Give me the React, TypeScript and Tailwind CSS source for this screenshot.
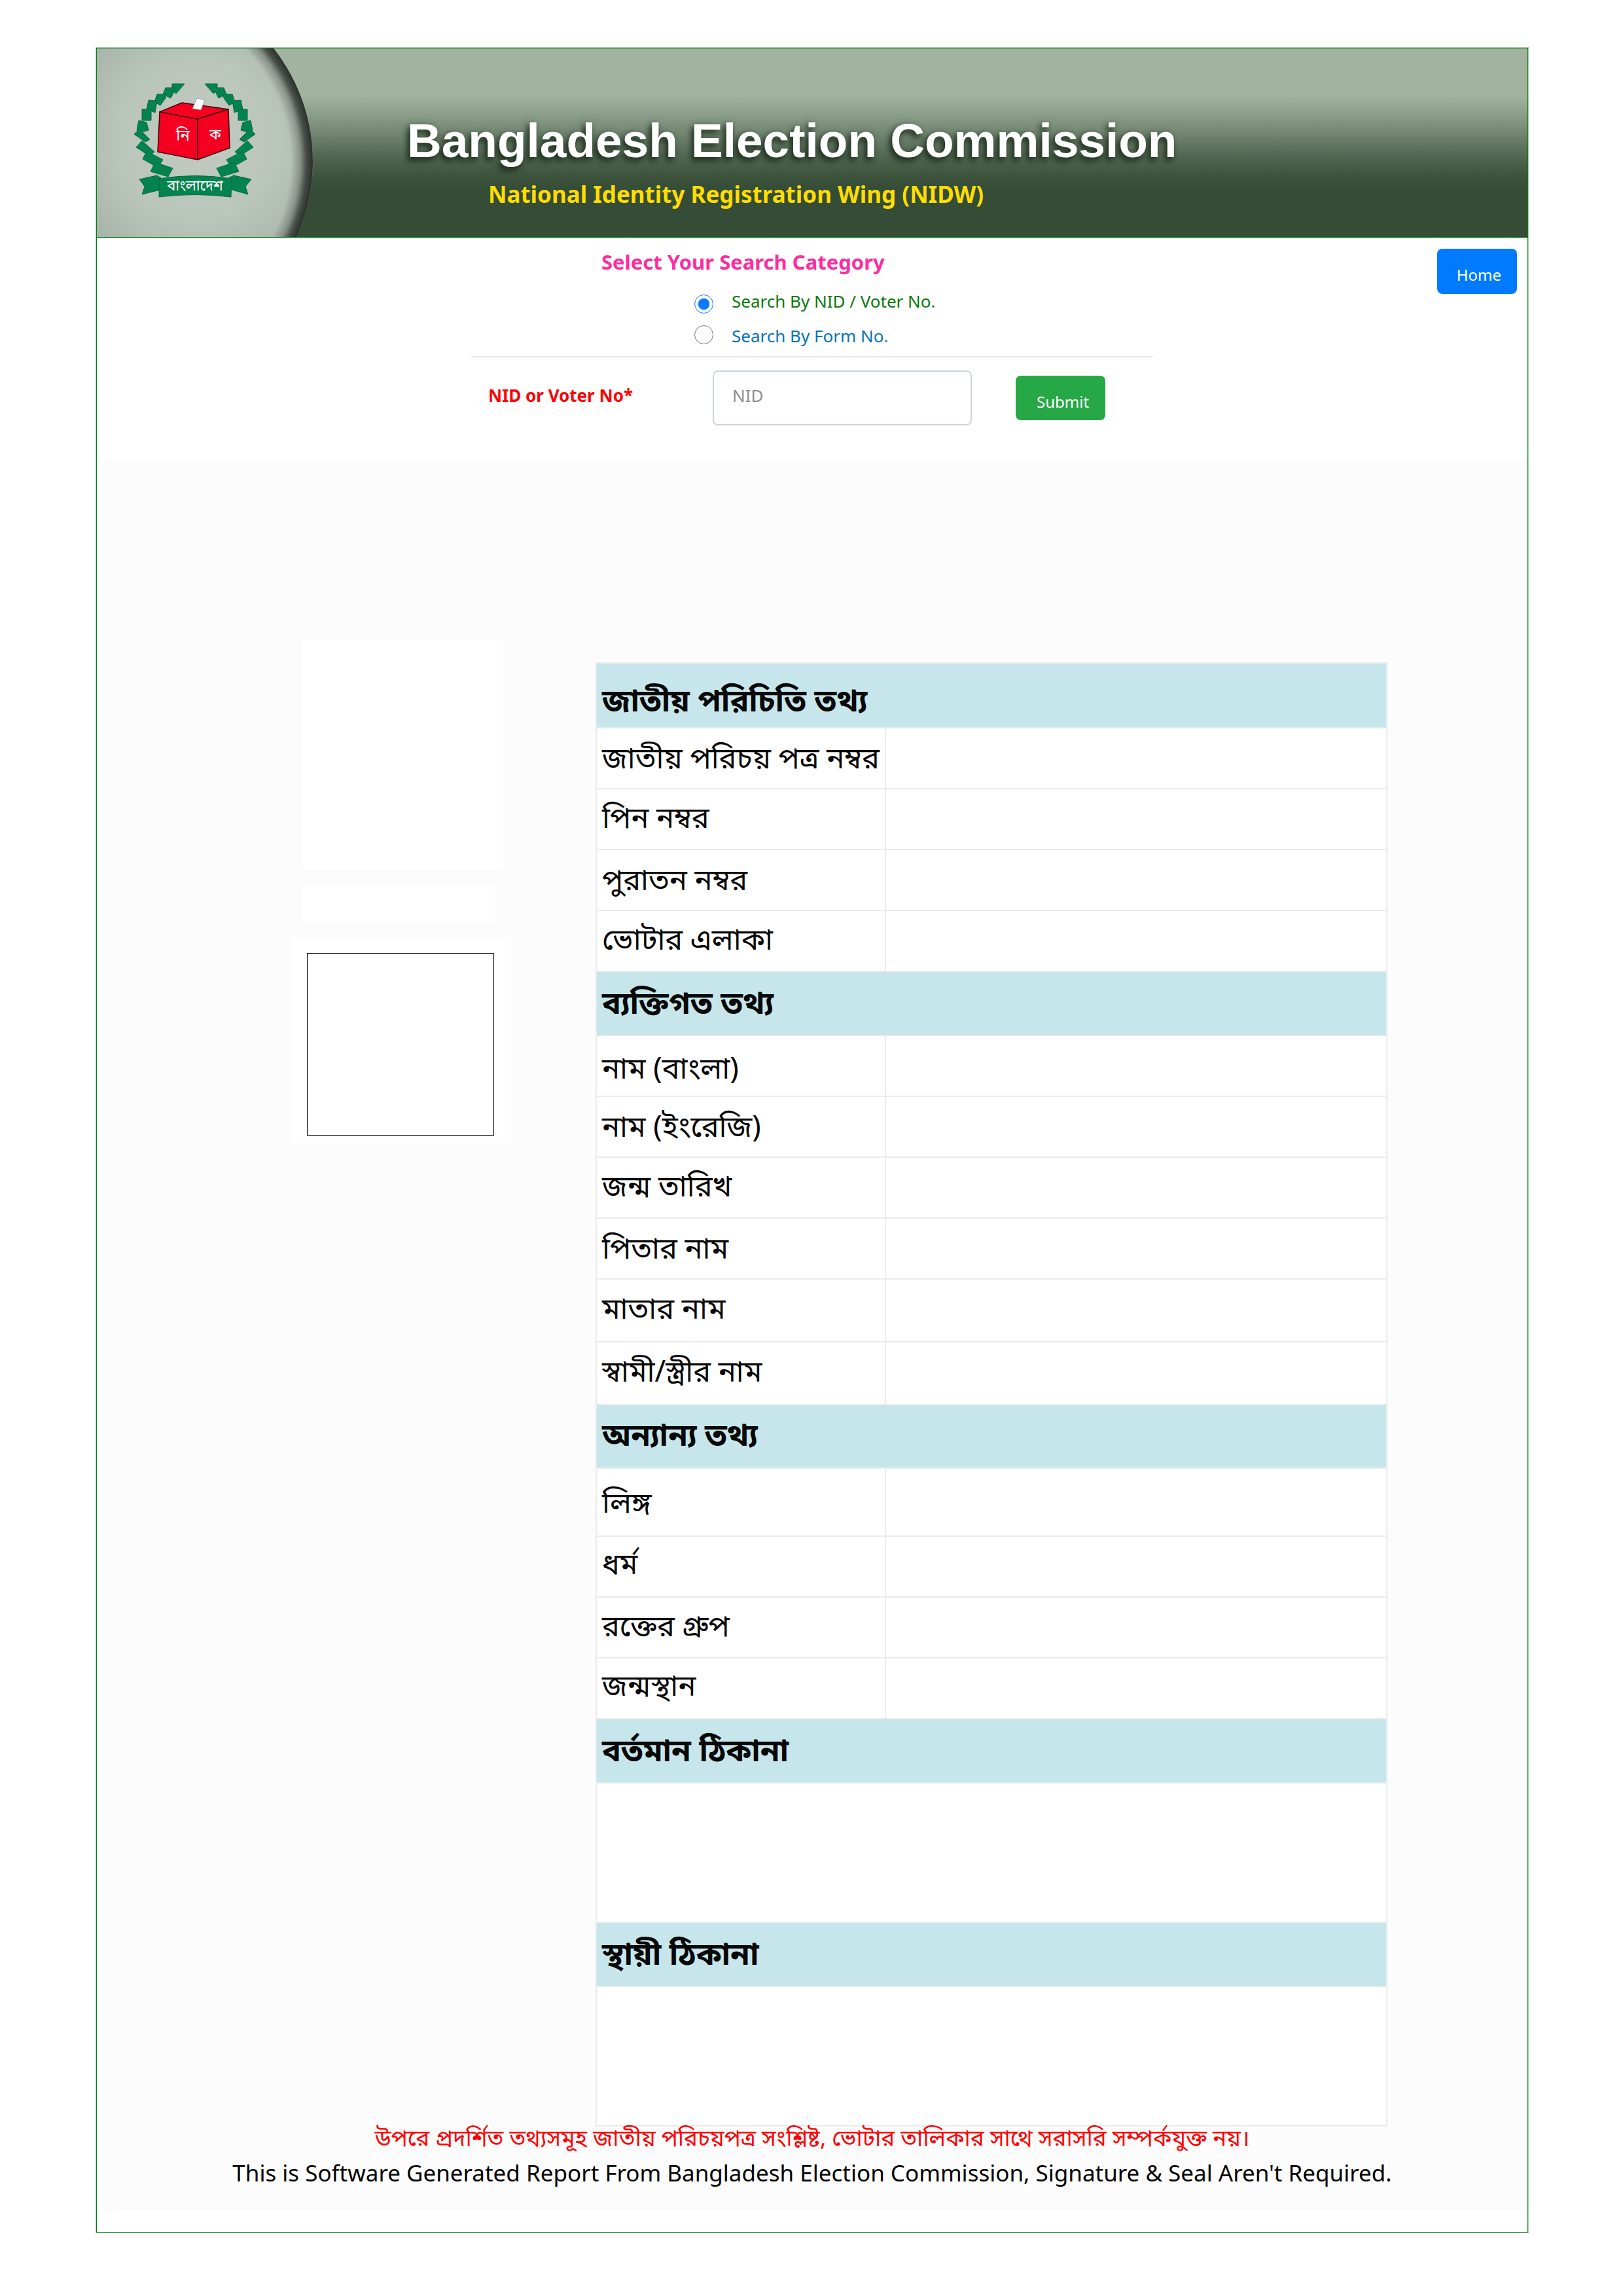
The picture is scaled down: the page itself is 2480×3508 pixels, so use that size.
import React from "react";

const sans = "font-['Noto_Sans','Open_Sans',sans-serif]";
const bangla = "font-['Noto_Sans_Bengali','Noto_Sans',sans-serif]";

type Row =
  | { kind: "section"; label: string; className: string }
  | { kind: "field"; label: string; className: string }
  | { kind: "blank"; label: string; className: string };

const rows: Row[] = [
  { kind: "section", label: "জাতীয় পরিচিতি তথ্য", className: "h-[99px] pt-6" },
  { kind: "field", label: "জাতীয় পরিচয় পত্র নম্বর", className: "h-[93px] pt-2" },
  { kind: "field", label: "পিন নম্বর", className: "h-[93px] pt-1" },
  { kind: "field", label: "পুরাতন নম্বর", className: "h-[93px] pt-2" },
  { kind: "field", label: "ভোটার এলাকা", className: "h-[93px] pt-1" },
  { kind: "section", label: "ব্যক্তিগত তথ্য", className: "h-[98px] pt-2" },
  { kind: "field", label: "নাম (বাংলা)", className: "h-[93px] pt-4" },
  { kind: "field", label: "নাম (ইংরেজি)", className: "h-[93px] pt-2" },
  { kind: "field", label: "জন্ম তারিখ", className: "h-[93px] pt-1" },
  { kind: "field", label: "পিতার নাম", className: "h-[93px] pt-2" },
  { kind: "field", label: "মাতার নাম", className: "h-24 pt-1" },
  { kind: "field", label: "স্বামী/স্ত্রীর নাম", className: "h-24 pt-1" },
  { kind: "section", label: "অন্যান্য তথ্য", className: "h-[97px] pt-1" },
  { kind: "field", label: "লিঙ্গ", className: "h-[104px] pt-3" },
  { kind: "field", label: "ধর্ম", className: "h-[93px]" },
  { kind: "field", label: "রক্তের গ্রুপ", className: "h-[93px] pt-1" },
  { kind: "field", label: "জন্মস্থান", className: "h-[93px]" },
  { kind: "section", label: "বর্তমান ঠিকানা", className: "h-[98px] pt-2" },
  { kind: "blank", label: "present", className: "h-[213px]" },
  { kind: "section", label: "স্থায়ী ঠিকানা", className: "h-[98px] pt-2" },
  { kind: "blank", label: "permanent", className: "h-[213px]" },
];

const leftLeaves = [
  "M133 68 L152 68 L139 83 L133 78 Z",
  "M123 74 L139 74 L131 90 L119 84 Z",
  "M110 84 L124 84 L123 90 L115 101 L106 96 Z",
  "M97 93 L110 94 L107 112 L94 107 Z",
  "M87 107 L101 107 L101 124 L87 124 Z",
  "M82 124 L94 127 L97 139 L86 142 L79 139 Z",
  "M83 137 L99 153 L92 157 L75 145 Z",
  "M87 155 L106 172 L98 178 L78 165 Z",
  "M94 171 L119 184 L111 196 L88 183 Z",
  "M107 188 L134 197 L127 210 L100 202 Z",
];

function Emblem() {
  return (
    <svg viewBox="0 0 340 288" className="h-[288px] w-[340px] shrink-0" role="img" aria-label="Bangladesh Election Commission emblem">
      <defs>
        <clipPath id="panel">
          <rect width="340" height="288" />
        </clipPath>
        <radialGradient id="sheen" gradientUnits="userSpaceOnUse" cx="155" cy="140" r="240">
          <stop offset="0" stopColor="#c2cac2" />
          <stop offset="0.5" stopColor="#bac5bb" />
          <stop offset="1" stopColor="#a3aea4" />
        </radialGradient>
        <radialGradient id="rim" gradientUnits="userSpaceOnUse" cx="50" cy="173" r="280">
          <stop offset="0.88" stopColor="#2b302b" stopOpacity="0" />
          <stop offset="0.93" stopColor="#2b302b" stopOpacity="0.3" />
          <stop offset="0.965" stopColor="#2b302b" stopOpacity="0.8" />
          <stop offset="1" stopColor="#2b302b" stopOpacity="1" />
        </radialGradient>
      </defs>
      <g clipPath="url(#panel)">
        <circle cx="50" cy="173" r="280" fill="url(#sheen)" />
        <circle cx="50" cy="173" r="280" fill="url(#rim)" />
      </g>
      <g transform="translate(-18 -14)">
        <g fill="#04834f" stroke="#046b41" strokeWidth="1">
          {leftLeaves.map((d) => (
            <path key={d} d={d} />
          ))}
          <g transform="translate(335 0) scale(-1 1)">
            {leftLeaves.map((d) => (
              <path key={d} d={d} />
            ))}
          </g>
          <path d="M83 214 L110 208 L116 212 L115 230 L87 237 L91 225 Z" />
          <path d="M254 214 L227 208 L219 212 L221 229 L249 237 L245 225 Z" />
          <path d="M113 213 Q168 204 224 213 L223 241 Q168 234 113 241 Z" />
        </g>
        <g fill="#f50021" stroke="#3a0008" strokeWidth="1.5" strokeLinejoin="round">
          <path d="M114 111 L148 97 L219 107 L172 122 Z" />
          <path d="M114 111 L172 122 L172 184 L111 172 Z" />
          <path d="M172 122 L219 107 L221 166 L172 184 Z" />
        </g>
        <path d="M171 90 L183 93 L177 108 L164 106 Z" fill="#fff" stroke="#888" strokeWidth="0.7" />
        <g fill="#fff" className="font-['Noto_Sans_Bengali','Noto_Sans',sans-serif]">
          <text x="139" y="155" fontSize="24">নি</text>
          <text x="190" y="153" fontSize="22">ক</text>
          <text x="168" y="231" fontSize="22" textAnchor="middle">বাংলাদেশ</text>
        </g>
      </g>
    </svg>
  );
}

function Header() {
  return (
    <header className="flex border-b-2 border-[#3d8f45] bg-[linear-gradient(to_bottom,#a2b3a0_0px,#a2b3a0_72px,#8fa38e_95px,#738773_128px,#566b57_160px,#40563f_190px,#354c36_215px)]">
      <Emblem />
      <div className="pt-[97px] pl-[134px]">
        <h1 className="font-['Liberation_Sans',Arial,sans-serif] text-[73px] leading-[88px] font-bold whitespace-nowrap text-white [text-shadow:-4px_6px_8px_rgba(20,35,20,0.7),-2px_2px_10px_rgba(20,35,20,0.5)]">
          Bangladesh Election Commission
        </h1>
        <p className="pt-[14px] pl-[124px] text-[35px] leading-[48px] font-bold whitespace-nowrap text-[#ffdd00]">
          National Identity Registration Wing (NIDW)
        </p>
      </div>
    </header>
  );
}

function SearchForm() {
  return (
    <div className="flex h-[339px]">
      <div className="flex-1" />
      <form className="w-[1042px]" onSubmit={(e) => e.preventDefault()}>
        <div className="h-[182px] border-b-2 border-[#e6e6e6]">
          <h2 className="pt-3 pl-[199px] text-[31px] leading-[48px] font-bold text-[#ff2ca0]">Select Your Search Category</h2>
          <div className="flex items-center gap-7 pt-[10px] pl-[341px]">
            <input id="by-nid" type="radio" name="category" defaultChecked className="mt-2 size-[29px] accent-[#0a7aff]" />
            <label htmlFor="by-nid" className="text-[26px] leading-[53px] text-[#087a08]">Search By NID / Voter No.</label>
          </div>
          <div className="flex items-center gap-7 pl-[341px]">
            <input id="by-form" type="radio" name="category" className="mb-1 size-[29px]" />
            <label htmlFor="by-form" className="text-[26px] leading-[53px] text-[#0673b8]">Search By Form No.</label>
          </div>
        </div>
        <div className="flex items-center pt-5 pl-[26px]">
          <label htmlFor="nid" className="w-[343px] pb-2 text-[26px] font-bold text-[#ff0000]">NID or Voter No*</label>
          <input
            id="nid"
            type="text"
            placeholder="NID"
            className="h-[84px] w-[396px] rounded-lg border-2 border-[#ced4da] bg-white px-7 pb-2 text-[26px] text-black placeholder:text-[#8f8f8f]"
          />
          <button type="submit" className="ml-[67px] h-[68px] rounded-lg bg-[#25a845] pt-3 pr-[25px] pl-8 text-[24px] text-white">
            Submit
          </button>
        </div>
      </form>
      <div className="flex flex-1 items-start justify-end pt-4">
        <button type="button" className="mr-4 h-[69px] rounded-lg bg-[#007bff] pt-[10px] pr-6 pl-[30px] text-[24px] text-white">
          Home
        </button>
      </div>
    </div>
  );
}

function Photos() {
  return (
    <div className="ml-[295px] flex w-[338px] shrink-0 flex-col pt-[274px]">
      <div className="ml-[18px] h-[352px] w-[307px] bg-white" />
      <div className="mt-[23px] ml-[18px] h-[58px] w-[295px] bg-white" />
      <div className="mt-[22px] bg-white px-[26px] pt-6 pb-3">
        <div className="h-[279px] border border-black" />
      </div>
    </div>
  );
}

function DetailsTable() {
  return (
    <table className="mt-[309px] mr-[214px] ml-[129px] flex-1 table-fixed border-collapse border-2 border-[#ebebeb] bg-white text-[#080808]">
      <colgroup>
        <col className="w-[442px]" />
        <col />
      </colgroup>
      <tbody className={bangla}>
        {rows.map((row) => {
          if (row.kind === "section") {
            return (
              <tr key={row.label}>
                <th colSpan={2} scope="colgroup" className={`border-2 border-[#e4ebec] bg-[#c7e6eb] px-2 text-left text-[48px] leading-[56px] font-bold ${row.className}`}>
                  {row.label}
                </th>
              </tr>
            );
          }
          if (row.kind === "blank") {
            return (
              <tr key={row.label}>
                <td colSpan={2} className={`border-2 border-[#ebebeb] ${row.className}`} />
              </tr>
            );
          }
          return (
            <tr key={row.label}>
              <th scope="row" className={`border-2 border-[#ebebeb] px-2 text-left text-[45px] leading-[56px] font-normal whitespace-nowrap ${row.className}`}>
                {row.label}
              </th>
              <td className="w-full border-2 border-[#ebebeb]" />
            </tr>
          );
        })}
      </tbody>
    </table>
  );
}

export default function App() {
  return (
    <div className={`bg-white pt-[73px] pr-[145px] pb-24 pl-[147px] ${sans}`}>
      <div className="border border-[#0b7a18] pb-[33px] ring-1 ring-[#a3cfa7]">
        <Header />
        <SearchForm />
        <main className="bg-[#fcfcfc] pb-7">
          <div className="flex items-start">
            <Photos />
            <DetailsTable />
          </div>
          <footer className="text-center">
            <p className={`text-[35px] leading-[42px] text-[#ff0000] ${bangla}`}>
              উপরে প্রদর্শিত তথ্যসমূহ জাতীয় পরিচয়পত্র সংশ্লিষ্ট, ভোটার তালিকার সাথে সরাসরি সম্পর্কযুক্ত নয়।
            </p>
            <p className="text-[35px] leading-[58px] text-black">
              This is Software Generated Report From Bangladesh Election Commission, Signature &amp; Seal Aren't Required.
            </p>
          </footer>
        </main>
      </div>
    </div>
  );
}
